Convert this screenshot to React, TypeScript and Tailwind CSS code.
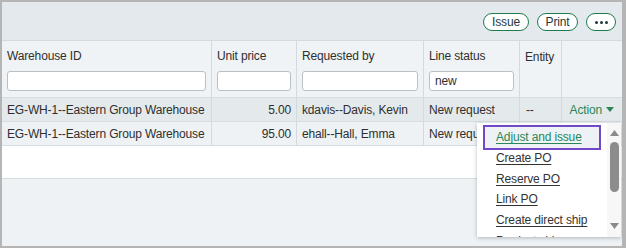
import React from "react";

const grid = "grid grid-cols-[210px_85px_127px_96px_42px_1fr]";
const cellB = "border-r border-[#d3dadd]";

function HeaderCell({ label, value, input = true }: { label: string; value?: string; input?: boolean }) {
  return (
    <div className={`flex flex-col px-[5px] pt-[8px] ${cellB}`}>
      <div className={`h-[14px] leading-[14px] whitespace-nowrap ${input ? "" : "mt-[1px]"}`}>{label}</div>
      {input && (
        <input
          readOnly
          defaultValue={value ?? ""}
          className="mt-[8px] h-[20px] w-full rounded-[3px] border border-[#b9c1c5] bg-white px-[5px] text-[12px] text-[#333] outline-none"
        />
      )}
    </div>
  );
}

function Row({ bg, cells }: { bg: string; cells: string[] }) {
  return (
    <div className={`${grid} h-[24px] border-b border-[#d6dde0] ${bg}`}>
      <div className={`flex items-center whitespace-nowrap overflow-hidden px-[5px] ${cellB}`}>{cells[0]}</div>
      <div className={`flex items-center justify-end whitespace-nowrap px-[5px] ${cellB}`}>{cells[1]}</div>
      <div className={`flex items-center whitespace-nowrap overflow-hidden px-[5px] ${cellB}`}>{cells[2]}</div>
      <div className={`flex items-center whitespace-nowrap overflow-hidden px-[5px] ${cellB}`}>{cells[3]}</div>
      <div className={`flex items-center whitespace-nowrap px-[6px] ${cellB}`}>{cells[4]}</div>
      <div className="flex items-center justify-end pr-[8px] text-[#2a8659]">
        {cells[5] ? (
          <>
            <span>{cells[5]}</span>
            <svg width="8" height="5" viewBox="0 0 8 5" className="ml-[4px]">
              <path d="M0 0h8L4 5z" fill="#2a8659" />
            </svg>
          </>
        ) : null}
      </div>
    </div>
  );
}

export default function App() {
  const items = ["Create PO", "Reserve PO", "Link PO", "Create direct ship", "Product ship"];
  return (
    <div className="relative flex h-[248px] w-[626px] flex-col overflow-hidden border-b-2 border-l-2 border-r-4 border-t-2 border-[#b5b5b5] font-['Liberation_Sans',Arial,sans-serif] text-[12px] tracking-[-0.15px] text-[#2f2f2f]">
      {/* toolbar */}
      <div className="flex h-[39px] shrink-0 items-start justify-end gap-[8px] border-b border-[#d3dadd] bg-[#e3e9ec] pr-[6px] pt-[11px]">
        <button className="flex h-[18px] w-[46px] items-center justify-center rounded-full border border-[#1f7a4d] bg-white text-[12px] text-[#1f3a38]">
          Issue
        </button>
        <button className="flex h-[18px] w-[41px] items-center justify-center rounded-full border border-[#1f7a4d] bg-white text-[12px] text-[#1f3a38]">
          Print
        </button>
        <button className="flex h-[18px] w-[30px] items-center justify-center gap-[2px] rounded-full border border-[#1f7a4d] bg-white">
          <span className="h-[3px] w-[3px] rounded-full bg-[#1f3a38]" />
          <span className="h-[3px] w-[3px] rounded-full bg-[#1f3a38]" />
          <span className="h-[3px] w-[3px] rounded-full bg-[#1f3a38]" />
        </button>
      </div>

      {/* header */}
      <div className={`${grid} h-[57px] shrink-0 border-b border-[#d6dde0] bg-[#eff3f5]`}>
        <HeaderCell label="Warehouse ID" />
        <HeaderCell label="Unit price" />
        <HeaderCell label="Requested by" />
        <HeaderCell label="Line status" value="new" />
        <HeaderCell label="Entity" input={false} />
        <div />
      </div>

      <Row
        bg="bg-[#e4eaec]"
        cells={["EG-WH-1--Eastern Group Warehouse", "5.00", "kdavis--Davis, Kevin", "New request", "--", "Action"]}
      />
      <Row
        bg="bg-[#eef2f4]"
        cells={["EG-WH-1--Eastern Group Warehouse", "95.00", "ehall--Hall, Emma", "New request", "", ""]}
      />

      <div className="h-[33px] shrink-0 border-b border-[#d6dde0] bg-white" />
      <div className="flex-1 bg-[#eef2f4]" />

      {/* dropdown */}
      <div className="absolute left-[475px] top-[121px] flex h-[114px] w-[144px] overflow-hidden bg-white shadow-[0_1px_4px_rgba(0,0,0,0.25)]">
        <div className="flex flex-1 flex-col pl-[8px] pr-[8px] pt-[4px]">
          <div className="flex h-[20.7px] shrink-0 items-center bg-[#eef2f4] pl-[11px] text-[#2a8659] underline underline-offset-2 outline-2 outline-[#7048c8]">
            Adjust and issue
          </div>
          {items.map((t) => (
            <div key={t} className="flex h-[20.7px] shrink-0 items-center whitespace-nowrap pl-[11px] text-[#333] underline underline-offset-2">
              {t}
            </div>
          ))}
        </div>
        <div className="flex w-[14px] shrink-0 flex-col items-center bg-[#f7f7f7] pt-[7px]">
          <svg width="9" height="6" viewBox="0 0 9 6">
            <path d="M4.5 0L9 6H0z" fill="#8a8a8a" />
          </svg>
          <div className="mt-[6px] h-[50px] w-[9px] rounded-full bg-[#8c8c8c]" />
          <div className="flex-1" />
          <svg width="9" height="6" viewBox="0 0 9 6" className="mb-[8px]">
            <path d="M0 0h9L4.5 6z" fill="#8a8a8a" />
          </svg>
        </div>
      </div>
    </div>
  );
}
